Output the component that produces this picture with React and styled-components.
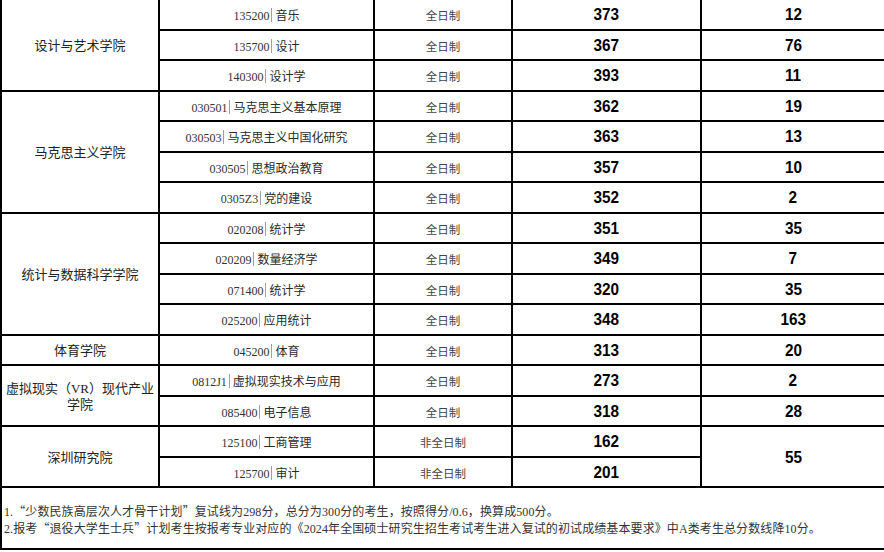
import React from "react";
import styled, { createGlobalStyle } from "styled-components";

const Global = createGlobalStyle`
  html, body { margin: 0; padding: 0; background: #fff; overflow: hidden; }
  body { font-family: "Liberation Serif", "Noto Sans CJK SC", serif; }
`;

const Table = styled.table`
  border-collapse: collapse;
  table-layout: fixed;
  width: 884px;
  margin-top: -2px;
`;

const Row = styled.tr`
  height: ${(p) => p.$h || 30.5}px;
`;

const Cell = styled.td`
  border: 2px solid #000;
  padding: 2px 2px 0;
  text-align: center;
  vertical-align: middle;
  color: #2a2a2a;
`;

const College = styled(Cell)`
  font-family: "Liberation Serif", "Noto Sans CJK SC", serif;
  font-size: 13px;
  line-height: 16px;
  color: #222;
`;

const Major = styled(Cell)`
  font-size: 12px;
  white-space: nowrap;
`;

const Code = styled.span`
  font-family: "Liberation Serif", serif;
  font-size: 12px;
  color: #333;
`;

const Sep = styled.span`
  display: inline-block;
  width: 1px;
  height: 14px;
  background: #a0a0a0;
  margin: 0 3px 0 2px;
  vertical-align: -2px;
`;

const Name = styled.span`
  font-family: "Noto Sans CJK SC", sans-serif;
  font-size: 12px;
  color: #2a2a2a;
`;

const Mode = styled(Cell)`
  font-family: "Noto Sans CJK SC", sans-serif;
  font-size: 11.5px;
  color: #444;
`;

const Num = styled(Cell)`
  font-family: "Liberation Sans", Arial, sans-serif;
  font-weight: bold;
  font-size: 17px;
  color: #000;
`;

const NumText = styled.span`
  display: inline-block;
  transform: scaleX(0.9);
`;

const Notes = styled.td`
  border: 2px solid #000;
  padding: 3px 2px 0;
  text-align: left;
  vertical-align: middle;
  font-family: "Liberation Serif", "Noto Sans CJK SC", serif;
  font-size: 12px;
  letter-spacing: 0.1px;
  line-height: 16px;
  color: #333;
  white-space: nowrap;
`;

const Q = styled.span`
  font-family: "Noto Sans CJK SC", sans-serif;
`;

const groups = [
  {
    name: "设计与艺术学院",
    rows: [
      ["135200", "音乐", "全日制", "373", "12"],
      ["135700", "设计", "全日制", "367", "76"],
      ["140300", "设计学", "全日制", "393", "11"],
    ],
  },
  {
    name: "马克思主义学院",
    rows: [
      ["030501", "马克思主义基本原理", "全日制", "362", "19"],
      ["030503", "马克思主义中国化研究", "全日制", "363", "13"],
      ["030505", "思想政治教育", "全日制", "357", "10"],
      ["0305Z3", "党的建设", "全日制", "352", "2"],
    ],
  },
  {
    name: "统计与数据科学学院",
    rows: [
      ["020208", "统计学", "全日制", "351", "35"],
      ["020209", "数量经济学", "全日制", "349", "7"],
      ["071400", "统计学", "全日制", "320", "35"],
      ["025200", "应用统计", "全日制", "348", "163"],
    ],
  },
  {
    name: "体育学院",
    rows: [["045200", "体育", "全日制", "313", "20"]],
  },
  {
    name: "虚拟现实（VR）现代产业学院",
    rows: [
      ["0812J1", "虚拟现实技术与应用", "全日制", "273", "2"],
      ["085400", "电子信息", "全日制", "318", "28"],
    ],
  },
  {
    name: "深圳研究院",
    sharedQuota: "55",
    rows: [
      ["125100", "工商管理", "非全日制", "162"],
      ["125700", "审计", "非全日制", "201"],
    ],
  },
];

export default function App() {
  return (
    <>
      <Global />
      <Table>
        <colgroup>
          <col style={{ width: 158 }} />
          <col style={{ width: 215 }} />
          <col style={{ width: 138 }} />
          <col style={{ width: 189 }} />
          <col style={{ width: 184 }} />
        </colgroup>
        <tbody>
          {groups.map((g) =>
            g.rows.map((r, i) => (
              <Row key={g.name + i}>
                {i === 0 && <College rowSpan={g.rows.length}>{g.name}</College>}
                <Major>
                  <Code>{r[0]}</Code>
                  <Sep />
                  <Name>{r[1]}</Name>
                </Major>
                <Mode>{r[2]}</Mode>
                <Num>
                  <NumText>{r[3]}</NumText>
                </Num>
                {g.sharedQuota ? (
                  i === 0 && (
                    <Num rowSpan={g.rows.length}>
                      <NumText>{g.sharedQuota}</NumText>
                    </Num>
                  )
                ) : (
                  <Num>
                    <NumText>{r[4]}</NumText>
                  </Num>
                )}
              </Row>
            ))
          )}
          <Row $h={62}>
            <Notes colSpan={5}>
              1.<Q>“</Q>少数民族高层次人才骨干计划<Q>”</Q>复试线为298分，总分为300分的考生，按照得分/0.6，换算成500分。
              <br />
              2.报考<Q>“</Q>退役大学生士兵<Q>”</Q>计划考生按报考专业对应的《2024年全国硕士研究生招生考试考生进入复试的初试成绩基本要求》中A类考生总分数线降10分。
            </Notes>
          </Row>
        </tbody>
      </Table>
    </>
  );
}
